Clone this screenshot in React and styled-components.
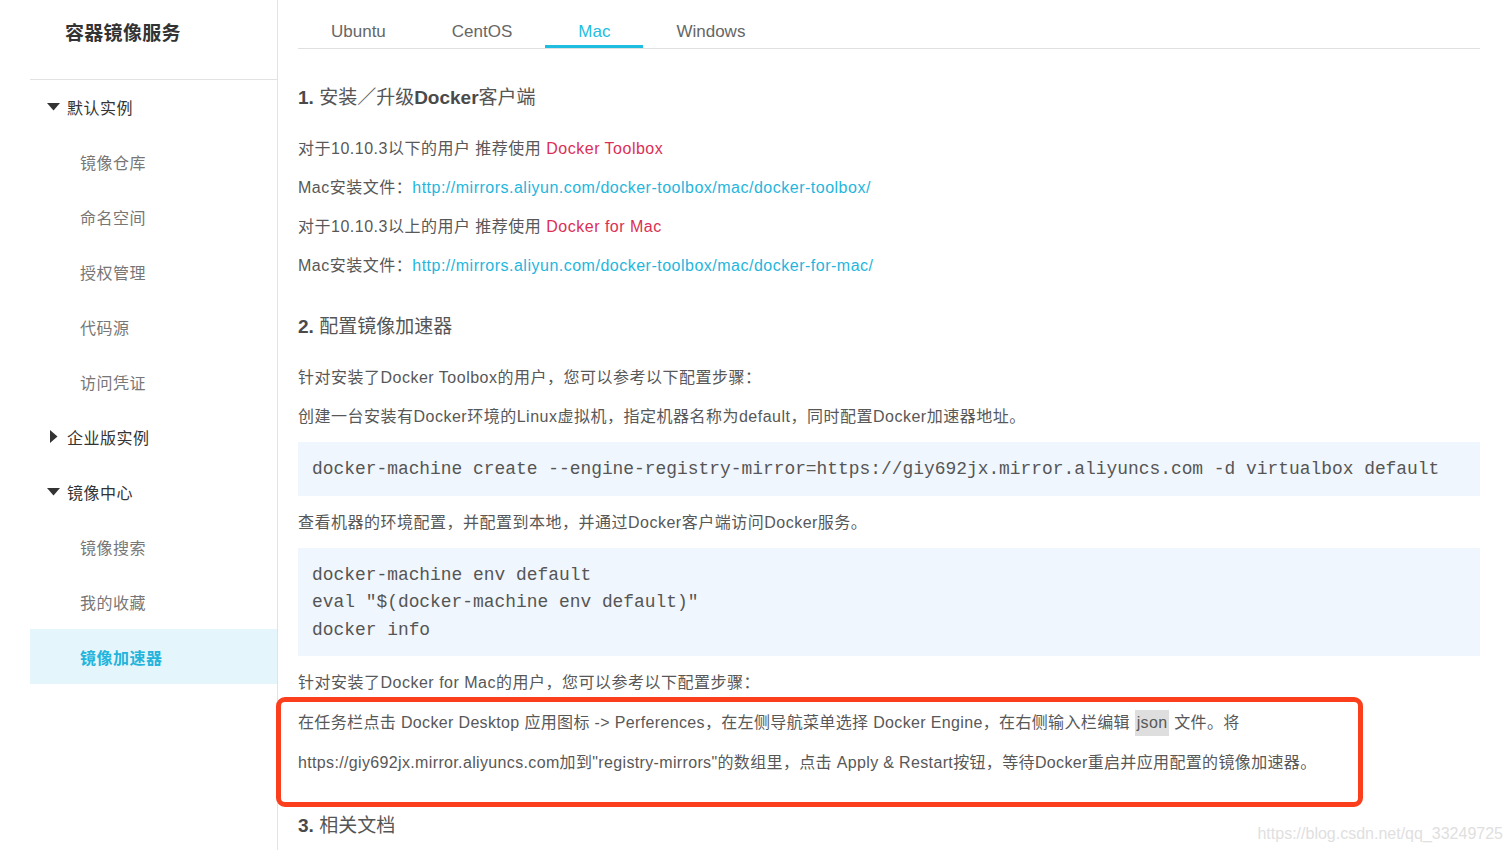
import React from "react";
import styled, { createGlobalStyle } from "styled-components";

const GlobalStyle = createGlobalStyle`
  html, body {
    margin: 0;
    padding: 0;
    background: #fff;
  }
  body {
    font-family: "Liberation Sans", "Noto Sans CJK SC", sans-serif;
    color: #555;
  }
  * {
    box-sizing: border-box;
  }
`;

const Page = styled.div`
  position: relative;
  display: flex;
  height: 100vh;
  padding-left: 30px;
  overflow: hidden;
`;

/* 左侧菜单 */
const Sidebar = styled.aside`
  width: 248px;
  flex-shrink: 0;
  border-right: 1px solid #e2e2e2;
`;

const SideTitle = styled.div`
  height: 80px;
  padding: 20px 0 0 35px;
  font-size: 19px;
  line-height: 28px;
  font-weight: bold;
  letter-spacing: 0.3px;
  color: #333;
  border-bottom: 1px solid #e2e2e2;
`;

const Menu = styled.div`
  margin-top: -1px;
`;

const MenuItem = styled.div`
  display: flex;
  align-items: center;
  height: 55px;
  padding-left: ${(p) => (p.$sub ? "50px" : "17px")};
  font-size: 16px;
  letter-spacing: 0.5px;
  color: ${(p) => (p.$active ? "#22b4dc" : p.$sub ? "#777" : "#333")};
  font-weight: ${(p) => (p.$active ? "bold" : "normal")};
  background: ${(p) => (p.$active ? "#e4f6fb" : "transparent")};
`;

const Caret = styled.span`
  display: inline-flex;
  width: 20px;
  justify-content: ${(p) => (p.$open ? "flex-start" : "center")};
  padding-right: ${(p) => (p.$open ? "0" : "6px")};
`;

function CaretIcon({ open }) {
  return (
    <Caret $open={open}>
      {open ? (
        <svg width="13" height="8" viewBox="0 0 13 8">
          <path d="M0 0 L13 0 L6.5 7.5 Z" fill="#333" />
        </svg>
      ) : (
        <svg width="8" height="13" viewBox="0 0 8 13">
          <path d="M0 0 L7.5 6.5 L0 13 Z" fill="#333" />
        </svg>
      )}
    </Caret>
  );
}

/* 右侧内容 */
const Main = styled.main`
  flex: 1;
  padding: 0 32px 0 20px;
`;

const TabBar = styled.div`
  display: flex;
  border-bottom: 1px solid #e0e0e0;
`;

const Tab = styled.div`
  padding: 22px 33px 3px;
  font-size: 17px;
  line-height: 20px;
  color: ${(p) => (p.$active ? "#1fbde0" : "#666")};
  border-bottom: 3px solid ${(p) => (p.$active ? "#1fbde0" : "transparent")};
`;

const Heading = styled.h3`
  margin: ${(p) => (p.$tight ? "5px 0 0" : "36px 0 26px")};
  font-size: 19px;
  line-height: 26px;
  font-weight: normal;
  color: #555;
  b {
    color: #4a4a4a;
  }
`;

const Para = styled.p`
  margin: 0 0 15px;
  font-size: 16px;
  line-height: 24px;
  letter-spacing: 0.5px;
  color: #585858;
  white-space: nowrap;
`;

const Red = styled.span`
  color: #dc2f55;
`;

const Link = styled.a`
  color: #1fb6dd;
  text-decoration: none;
`;

const Code = styled.pre`
  margin: -2px 0 15px;
  padding: 14px 14px 12px;
  background: #f0f6fd;
  font-family: "Liberation Mono", "Courier New", monospace;
  font-size: 17.9px;
  line-height: 27.5px;
  color: #555;
  white-space: pre;
`;

const Annotation = styled.div`
  width: 1087px;
  margin: -13px 0 6px -22px;
  padding: 8px 0 12px 17px;
  border: 5px solid #fb3f1d;
  border-radius: 9px;
  position: relative;
  z-index: 1;
  background: #fff;
  ${Para} {
    letter-spacing: 0.35px;
  }
`;

const Mark = styled.span`
  display: inline-block;
  padding: 0 2px;
  background: #dedede;
  line-height: 26px;
`;

const Watermark = styled.div`
  position: absolute;
  right: 9px;
  bottom: 7px;
  font-size: 16px;
  color: #e0e0e0;
  font-family: "Liberation Sans Narrow", "Liberation Sans", sans-serif;
`;

const menu = [
  { label: "默认实例", top: true, open: true },
  { label: "镜像仓库" },
  { label: "命名空间" },
  { label: "授权管理" },
  { label: "代码源" },
  { label: "访问凭证" },
  { label: "企业版实例", top: true, open: false },
  { label: "镜像中心", top: true, open: true },
  { label: "镜像搜索" },
  { label: "我的收藏" },
  { label: "镜像加速器", active: true },
];

const tabs = ["Ubuntu", "CentOS", "Mac", "Windows"];

export default function App() {
  return (
    <>
      <GlobalStyle />
      <Page>
        <Sidebar>
          <SideTitle>容器镜像服务</SideTitle>
          <Menu>
            {menu.map((m) => (
              <MenuItem key={m.label} $sub={!m.top} $active={m.active}>
                {m.top && <CaretIcon open={m.open} />}
                {m.label}
              </MenuItem>
            ))}
          </Menu>
        </Sidebar>

        <Main>
          <TabBar>
            {tabs.map((t) => (
              <Tab key={t} $active={t === "Mac"}>
                {t}
              </Tab>
            ))}
          </TabBar>

          <Heading>
            <b>1.</b> 安装／升级<b>Docker</b>客户端
          </Heading>
          <Para>
            对于10.10.3以下的用户 推荐使用 <Red>Docker Toolbox</Red>
          </Para>
          <Para>
            Mac安装文件：
            <Link href="#">http://mirrors.aliyun.com/docker-toolbox/mac/docker-toolbox/</Link>
          </Para>
          <Para>
            对于10.10.3以上的用户 推荐使用 <Red>Docker for Mac</Red>
          </Para>
          <Para>
            Mac安装文件：
            <Link href="#">http://mirrors.aliyun.com/docker-toolbox/mac/docker-for-mac/</Link>
          </Para>

          <Heading>
            <b>2.</b> 配置镜像加速器
          </Heading>
          <Para>针对安装了Docker Toolbox的用户，您可以参考以下配置步骤：</Para>
          <Para>创建一台安装有Docker环境的Linux虚拟机，指定机器名称为default，同时配置Docker加速器地址。</Para>
          <Code>
            docker-machine create --engine-registry-mirror=https://giy692jx.mirror.aliyuncs.com -d virtualbox default
          </Code>
          <Para>查看机器的环境配置，并配置到本地，并通过Docker客户端访问Docker服务。</Para>
          <Code>
            {`docker-machine env default
eval "$(docker-machine env default)"
docker info`}
          </Code>
          <Para>针对安装了Docker for Mac的用户，您可以参考以下配置步骤：</Para>

          <Annotation>
            <Para>
              在任务栏点击 Docker Desktop 应用图标 -&gt; Perferences，在左侧导航菜单选择 Docker Engine，在右侧输入栏编辑 <Mark>json</Mark> 文件。将
            </Para>
            <Para>
              https://giy692jx.mirror.aliyuncs.com加到"registry-mirrors"的数组里，点击 Apply &amp; Restart按钮，等待Docker重启并应用配置的镜像加速器。
            </Para>
          </Annotation>

          <Heading $tight>
            <b>3.</b> 相关文档
          </Heading>
        </Main>

        <Watermark>https://blog.csdn.net/qq_33249725</Watermark>
      </Page>
    </>
  );
}
